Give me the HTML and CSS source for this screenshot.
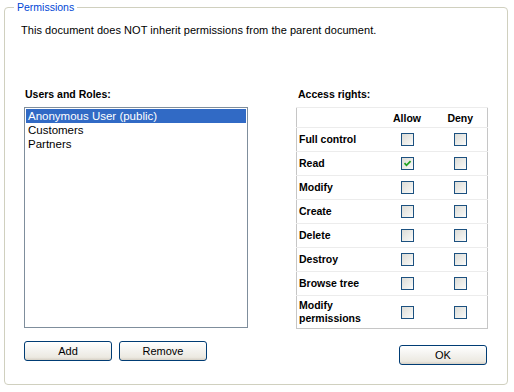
FILE: index.html
```
<!DOCTYPE html>
<html lang="en">

<head>
    <meta charset="utf-8">
    <meta name="viewport" content="width=device-width, initial-scale=1.0">
    <title>Permissions</title>
    <link rel="stylesheet" href="styles.css">
</head>

<body>
    <fieldset class="perm">
        <legend>Permissions</legend>
        <p class="intro">This document does NOT inherit permissions from the parent document.</p>

        <div class="cols">
            <div class="col users">
                <h3 class="label">Users and Roles:</h3>
                <ul class="listbox">
                    <li class="valgt">Anonymous User (public)</li>
                    <li>Customers</li>
                    <li>Partners</li>
                </ul>
                <div class="actions">
                    <button>Add</button>
                    <button>Remove</button>
                </div>
            </div>

            <div class="col rights">
                <h3 class="label">Access rights:</h3>
                <table class="rights_table">
                    <tr class="head">
                        <th></th>
                        <th>Allow</th>
                        <th>Deny</th>
                    </tr>
                    <tr>
                        <td class="navn">Full control</td>
                        <td><span class="box"></span></td>
                        <td><span class="box"></span></td>
                    </tr>
                    <tr>
                        <td class="navn">Read</td>
                        <td><span class="box checked"><svg viewBox="0 0 11 11" width="11" height="11"><path d="M2.5 5.2 L4.5 7.3 L8.6 3.2" fill="none" stroke="#21a121" stroke-width="1.8"/></svg></span></td>
                        <td><span class="box"></span></td>
                    </tr>
                    <tr>
                        <td class="navn">Modify</td>
                        <td><span class="box"></span></td>
                        <td><span class="box"></span></td>
                    </tr>
                    <tr>
                        <td class="navn">Create</td>
                        <td><span class="box"></span></td>
                        <td><span class="box"></span></td>
                    </tr>
                    <tr>
                        <td class="navn">Delete</td>
                        <td><span class="box"></span></td>
                        <td><span class="box"></span></td>
                    </tr>
                    <tr>
                        <td class="navn">Destroy</td>
                        <td><span class="box"></span></td>
                        <td><span class="box"></span></td>
                    </tr>
                    <tr>
                        <td class="navn">Browse tree</td>
                        <td><span class="box"></span></td>
                        <td><span class="box"></span></td>
                    </tr>
                    <tr class="last">
                        <td class="navn">Modify<br>permissions</td>
                        <td><span class="box"></span></td>
                        <td><span class="box"></span></td>
                    </tr>
                </table>
                <div class="actions ok">
                    <button>OK</button>
                </div>
            </div>
        </div>
    </fieldset>
</body>

</html>
```

FILE: styles.css
```
* {
    margin: 0;
    box-sizing: border-box;
}

body {
    background-color: #ffffff;
    font-family: 'Liberation Sans', Arial, sans-serif;
    color: #000000;
}

.perm {
    margin: 0 6px 0 4px;
    padding: 0 19px 0 19px;
    height: 385px;
    border: 1px solid #d0d0bf;
    border-radius: 4px;
    min-width: 0;
}

.perm legend {
    margin-left: -10px;
    padding: 0 3px;
    font-size: 10.5px;
    line-height: 14px;
    color: #0046d5;
}

.intro {
    margin-top: 9px;
    margin-left: -3px;
    font-size: 11px;
    line-height: 14px;
    letter-spacing: 0.05px;
}

.cols {
    display: flex;
    justify-content: space-between;
    margin-top: 50px;
}

.users {
    width: 224px;
}

.rights {
    width: 192px;
}

.label {
    font-size: 10.5px;
    line-height: 14px;
    font-weight: bold;
    margin-left: 1px;
    margin-bottom: 6px;
}

.rights .label {
    margin-left: 2px;
}

.listbox {
    list-style: none;
    padding: 1px;
    height: 221px;
    border: 1px solid #7f8e9c;
    font-size: 11.5px;
    line-height: 14px;
}

.listbox li {
    padding-left: 2px;
    padding-top: 1px;
    height: 14px;
    line-height: 13px;
}

.valgt {
    background-color: #316ac5;
    color: #ffffff;
}

.actions {
    display: flex;
    gap: 7px;
    margin-top: 13px;
}

.ok {
    justify-content: flex-end;
    margin-top: 16px;
    padding-right: 1px;
}

button {
    width: 88px;
    height: 20px;
    padding: 0;
    font-family: 'Liberation Sans', Arial, sans-serif;
    font-size: 11px;
    color: #000000;
    border: 1px solid #003c74;
    border-radius: 3px;
    background: linear-gradient(#ffffff, #f3f2ee 50%, #ece9e1 85%, #d6d0c5);
}

.rights_table {
    width: 192px;
    height: 222px;
    border-collapse: collapse;
    border: 1px solid #c6c6c6;
    font-size: 10.5px;
    font-weight: bold;
}

.rights_table tr {
    border-top: 1px solid #ececec;
}

.rights_table .head {
    height: 20px;
}

.rights_table th {
    font-weight: bold;
    text-align: center;
    padding: 0;
}

.rights_table th:nth-child(1) {
    width: 84px;
}

.rights_table th:nth-child(2) {
    width: 53px;
}

.rights_table td {
    padding: 0;
    text-align: center;
    line-height: 13px;
    height: 24px;
}

.rights_table .navn {
    text-align: left;
    padding-left: 2px;
}

.rights_table .last td {
    height: 33px;
}

.box {
    display: inline-block;
    width: 13px;
    height: 13px;
    vertical-align: middle;
    border: 1px solid #1c5180;
    background: linear-gradient(135deg, #dcdcd7, #f4f4f1 80%, #ffffff);
}

.box svg {
    display: block;
}
```
